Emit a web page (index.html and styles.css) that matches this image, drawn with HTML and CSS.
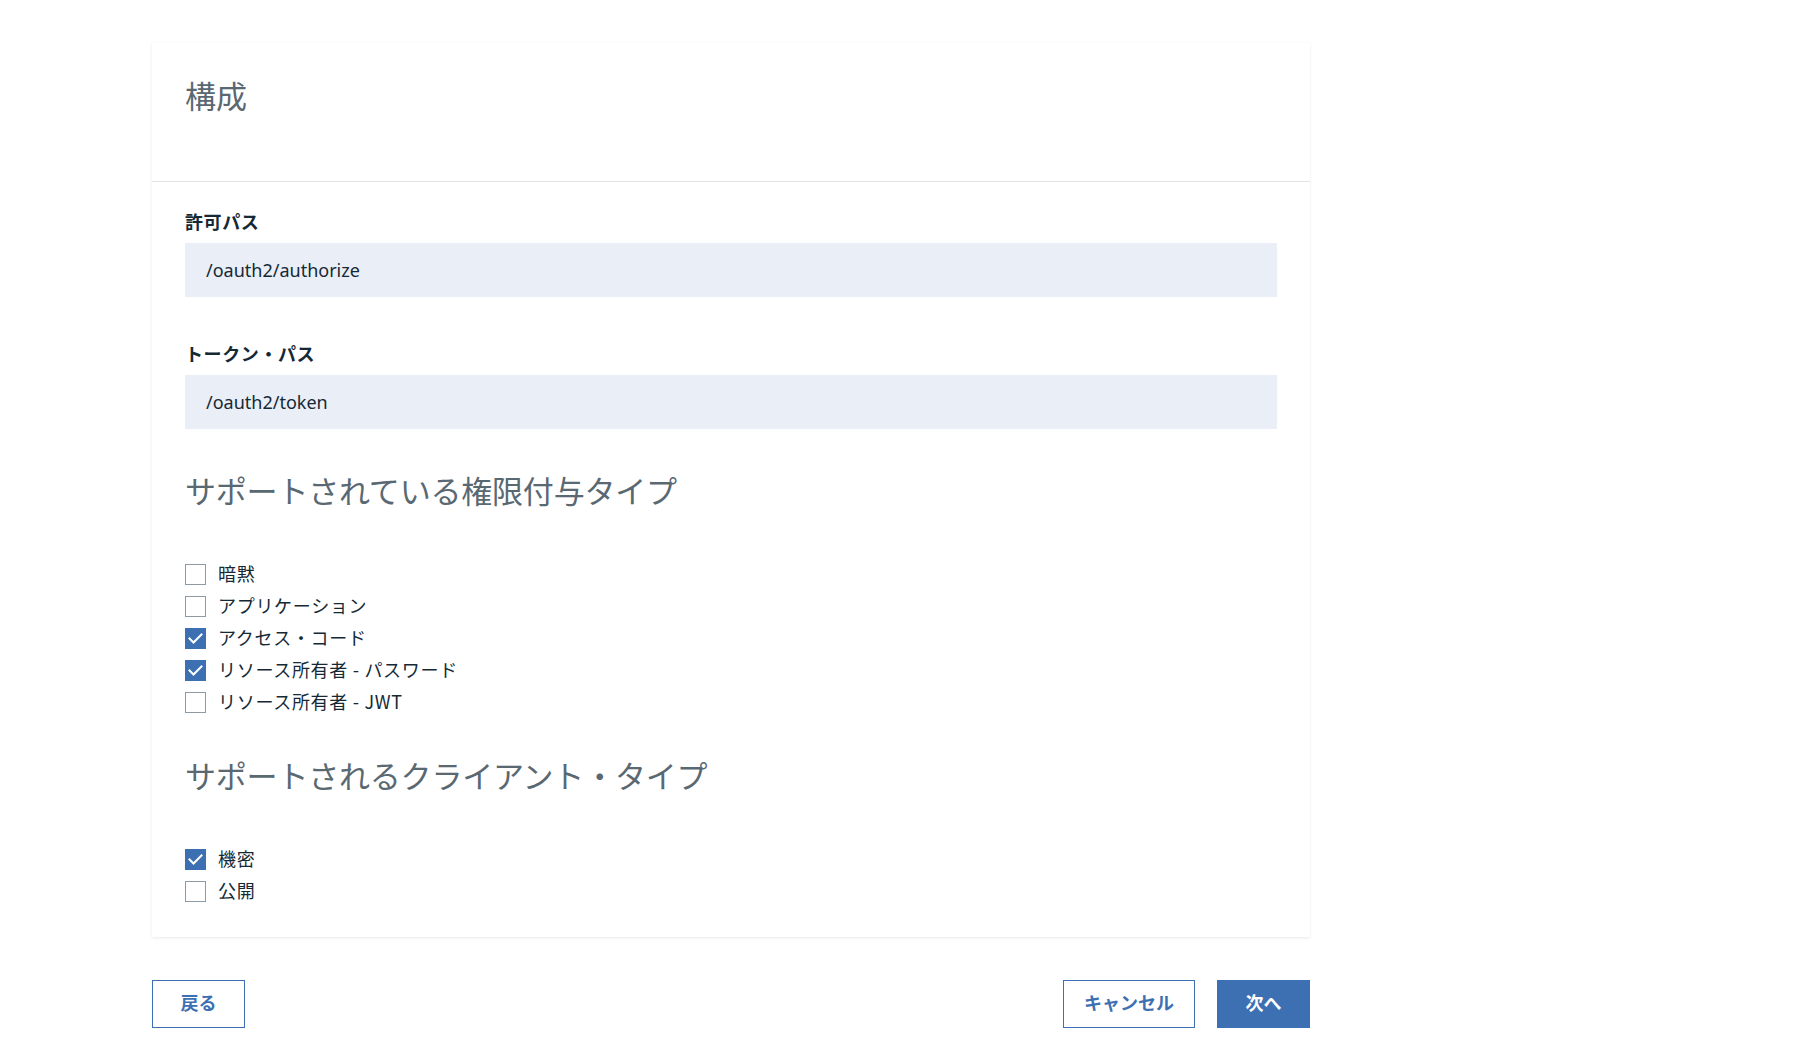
FILE: index.html
```html
<!DOCTYPE html>
<html lang="ja">
<head>
<meta charset="utf-8">
<title>構成</title>
<link rel="stylesheet" href="styles.css">
</head>
<body>
<div class="page">
  <section class="card">
    <header class="card-header">
      <h1 class="title">構成</h1>
    </header>
    <div class="card-body">
      <div class="field">
        <label class="field-label">許可パス</label>
        <div class="input">/oauth2/authorize</div>
      </div>
      <div class="field">
        <label class="field-label">トークン・パス</label>
        <div class="input">/oauth2/token</div>
      </div>

      <h2 class="section-title">サポートされている権限付与タイプ</h2>
      <ul class="checks">
        <li class="check"><span class="box"></span><span class="check-label">暗黙</span></li>
        <li class="check"><span class="box"></span><span class="check-label">アプリケーション</span></li>
        <li class="check"><span class="box checked"><svg viewBox="0 0 21 21" width="21" height="21"><polyline points="4.5,10.5 8.5,14.5 16.5,6.5" /></svg></span><span class="check-label">アクセス・コード</span></li>
        <li class="check"><span class="box checked"><svg viewBox="0 0 21 21" width="21" height="21"><polyline points="4.5,10.5 8.5,14.5 16.5,6.5" /></svg></span><span class="check-label">リソース所有者 - パスワード</span></li>
        <li class="check"><span class="box"></span><span class="check-label">リソース所有者 - JWT</span></li>
      </ul>

      <h2 class="section-title section-title-2">サポートされるクライアント・タイプ</h2>
      <ul class="checks">
        <li class="check"><span class="box checked"><svg viewBox="0 0 21 21" width="21" height="21"><polyline points="4.5,10.5 8.5,14.5 16.5,6.5" /></svg></span><span class="check-label">機密</span></li>
        <li class="check"><span class="box"></span><span class="check-label">公開</span></li>
      </ul>
    </div>
  </section>

  <div class="actions">
    <button class="btn btn-secondary">戻る</button>
    <div class="actions-right">
      <button class="btn btn-secondary">キャンセル</button>
      <button class="btn btn-primary">次へ</button>
    </div>
  </div>
</div>
</body>
</html>
```

FILE: styles.css
```css
* { box-sizing: border-box; }

html, body {
  margin: 0;
  padding: 0;
  background: #ffffff;
}

body {
  font-family: "Noto Sans CJK JP", "Noto Sans", sans-serif;
  color: #152935;
}

.page {
  width: 1158px;
  margin-left: 152px;
  padding-top: 43px;
}

.card {
  background: #ffffff;
  box-shadow: 0 1px 3px rgba(0, 0, 0, 0.09);
}

.card-header {
  padding: 32px 33px 66px;
  border-bottom: 1px solid #dfe3e6;
}

.title {
  margin: 0;
  font-size: 31px;
  line-height: 40px;
  font-weight: 400;
  color: #5a6872;
}

.card-body {
  padding: 27px 33px 30px;
}

.field {
  margin-bottom: 44px;
}

.field-label {
  display: block;
  font-size: 18px;
  line-height: 24px;
  font-weight: 700;
  letter-spacing: 0.6px;
  color: #152935;
  margin-bottom: 10px;
}

.input {
  height: 54px;
  background: #eaeef6;
  padding: 0 21px;
  display: flex;
  align-items: center;
  font-family: "Noto Sans", "Noto Sans CJK JP", sans-serif;
  font-size: 18px;
  color: #152935;
}

.section-title {
  margin: 41px 0 48px;
  font-size: 31px;
  line-height: 40px;
  font-weight: 400;
  letter-spacing: -0.2px;
  color: #5a6872;
}

.field + .field + .section-title {
  margin-top: -3px;
}

.section-title-2 {
  margin-top: 37px;
}

.checks {
  list-style: none;
  margin: 0;
  padding: 0;
}

.check {
  height: 32px;
  display: flex;
  align-items: center;
  gap: 12px;
}

.box {
  width: 21px;
  height: 21px;
  border: 1px solid #8c9ba5;
  background: #ffffff;
  flex: none;
  display: flex;
}

.box.checked {
  background: #3d70b2;
  border-color: #3d70b2;
}

.box svg {
  margin: -1px;
  fill: none;
  stroke: #ffffff;
  stroke-width: 2;
  stroke-linecap: square;
}

.check-label {
  font-size: 18px;
  line-height: 24px;
  letter-spacing: 0.7px;
  padding-bottom: 2px;
  color: #152935;
}

.actions {
  margin-top: 43px;
  display: flex;
  justify-content: space-between;
}

.actions-right {
  display: flex;
  gap: 22px;
}

.btn {
  height: 48px;
  min-width: 93px;
  padding: 0 20px 5px;
  font-family: "Noto Sans CJK JP", sans-serif;
  font-size: 18px;
  font-weight: 700;
  border: 1px solid #3d70b2;
  background: #ffffff;
  color: #3d70b2;
  cursor: pointer;
}

.btn-primary {
  background: #3d70b2;
  color: #ffffff;
}
```
